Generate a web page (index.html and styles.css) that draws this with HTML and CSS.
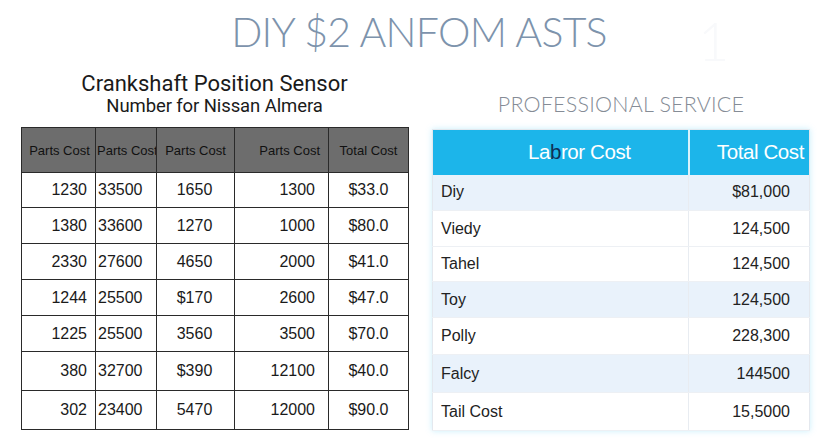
FILE: index.html
```html
<!DOCTYPE html>
<html>
<head>
<meta charset="utf-8">
<link rel="stylesheet" href="styles.css">
</head>
<body>
<div class="page">
  <header class="top">
    <h1 class="title">DIY $2 ANFOM ASTS</h1>
    <span class="ghost">1</span>
  </header>
  <div class="cols">
    <section class="left">
      <h2 class="lh"><span class="l1">Crankshaft Position Sensor</span><span class="l2">Number for Nissan Almera</span></h2>
      <table class="parts">
        <thead>
          <tr><th class="c1">Parts Cost</th><th class="c2">Parts Cost</th><th class="c3">Parts Cost</th><th class="c4">Parts Cost</th><th class="c5">Total Cost</th></tr>
        </thead>
        <tbody>
          <tr class="r1"><td class="c1">1230</td><td class="c2">33500</td><td class="c3">1650</td><td class="c4">1300</td><td class="c5">$33.0</td></tr>
          <tr class="r2"><td class="c1">1380</td><td class="c2">33600</td><td class="c3">1270</td><td class="c4">1000</td><td class="c5">$80.0</td></tr>
          <tr class="r3"><td class="c1">2330</td><td class="c2">27600</td><td class="c3">4650</td><td class="c4">2000</td><td class="c5">$41.0</td></tr>
          <tr class="r4"><td class="c1">1244</td><td class="c2">25500</td><td class="c3">$170</td><td class="c4">2600</td><td class="c5">$47.0</td></tr>
          <tr class="r5"><td class="c1">1225</td><td class="c2">25500</td><td class="c3">3560</td><td class="c4">3500</td><td class="c5">$70.0</td></tr>
          <tr class="r6"><td class="c1">380</td><td class="c2">32700</td><td class="c3">$390</td><td class="c4">12100</td><td class="c5">$40.0</td></tr>
          <tr class="r7"><td class="c1">302</td><td class="c2">23400</td><td class="c3">5470</td><td class="c4">12000</td><td class="c5">$90.0</td></tr>
        </tbody>
      </table>
    </section>
    <section class="right">
      <h2 class="rh">PROFESSIONAL SERVICE</h2>
      <table class="service">
        <thead>
          <tr><th class="s1">La<span class="cur">b</span>ror Cost</th><th class="s2">Total Cost</th></tr>
        </thead>
        <tbody>
          <tr class="alt h1r"><td>Diy</td><td class="v">$81,000</td></tr>
          <tr class="h2r"><td>Viedy</td><td class="v">124,500</td></tr>
          <tr class="h3r"><td>Tahel</td><td class="v">124,500</td></tr>
          <tr class="alt h4r"><td>Toy</td><td class="v">124,500</td></tr>
          <tr class="h5r"><td>Polly</td><td class="v">228,300</td></tr>
          <tr class="alt h6r"><td>Falcy</td><td class="v">144500</td></tr>
          <tr class="h7r"><td>Tail Cost</td><td class="v">15,5000</td></tr>
        </tbody>
      </table>
    </section>
  </div>
</div>
</body>
</html>
```
FILE: styles.css
```css
html, body {
  margin: 0;
  padding: 0;
  background: #ffffff;
}
.page {
  width: 832px;
  height: 448px;
  overflow: hidden;
  font-family: "Liberation Sans", Arial, sans-serif;
}
.top {
  position: relative;
  height: 66px;
  display: flex;
  justify-content: center;
}
.title {
  margin: 0;
  padding-top: 5px;
  padding-left: 6px;
  font-family: Lato, "Open Sans", sans-serif;
  font-weight: 300;
  font-size: 41px;
  line-height: 54px;
  letter-spacing: -0.7px;
  color: #7d93ac;
}
.ghost {
  position: absolute;
  left: 698px;
  top: 8px;
  font-family: Lato, sans-serif;
  font-weight: 300;
  font-size: 54px;
  color: #f8f9fb;
}
.cols {
  display: flex;
  gap: 24px;
  padding-left: 21px;
}
.left {
  width: 387px;
  display: flex;
  flex-direction: column;
}
.lh {
  margin: 0;
  height: 61px;
  display: flex;
  flex-direction: column;
  align-items: center;
  font-family: Roboto, "Open Sans", sans-serif;
  font-weight: 400;
  color: #1a1a1a;
}
.l1 {
  font-size: 22px;
  line-height: 24px;
  padding-top: 6px;
  letter-spacing: 0;
}
.l2 {
  font-size: 18.5px;
  line-height: 20px;
  letter-spacing: -0.1px;
}
.parts {
  border-collapse: collapse;
  width: 387px;
  font-size: 16px;
  color: #1a1a1a;
  table-layout: fixed;
}
.parts th, .parts td {
  box-sizing: border-box;
  border: 1.5px solid #2a2a2a;
  padding: 0;
  white-space: nowrap;
  overflow: hidden;
}
.parts thead th {
  background: #6d6d6d;
  height: 45px;
  font-size: 13px;
  font-weight: 400;
  color: #111;
}
.parts th.c1, .parts td.c1 { width: 74px; }
.parts th.c2, .parts td.c2 { width: 61px; }
.parts th.c3, .parts td.c3 { width: 78px; }
.parts th.c4, .parts td.c4 { width: 94px; }
.parts th.c5, .parts td.c5 { width: 80px; }
.parts td.c1 { text-align: right; padding-right: 8px; }
.parts td.c2 { text-align: left; padding-left: 2px; }
.parts td.c3 { text-align: center; padding-right: 2px; }
.parts td.c4 { text-align: right; padding-right: 13px; }
.parts td.c5 { text-align: center; }
.parts th.c1 { text-align: center; padding-left: 2px; }
.parts th.c2 { text-align: left; padding-left: 1px; }
.parts th.c4 { text-align: right; padding-right: 8px; }
.parts tr.r1 td { height: 35px; }
.parts tr.r2 td, .parts tr.r3 td, .parts tr.r4 td, .parts tr.r5 td { height: 36px; }
.parts tr.r6 td, .parts tr.r7 td { height: 39px; }
.right {
  width: 378px;
  display: flex;
  flex-direction: column;
}
.rh {
  margin: 0;
  height: 63px;
  box-sizing: border-box;
  display: flex;
  align-items: flex-end;
  justify-content: center;
  padding-bottom: 12px;
  font-family: Lato, "Open Sans", sans-serif;
  font-weight: 300;
  font-size: 21.5px;
  letter-spacing: 0.2px;
  color: #858c96;
}
.service {
  border-collapse: collapse;
  width: 378px;
  table-layout: fixed;
  font-size: 16px;
  color: #222;
  border: 1px solid #e4e8ee;
  box-shadow: 0 0 6px rgba(100, 210, 245, 0.35);
}
.service th, .service td {
  box-sizing: border-box;
}
.service thead th {
  background: #1cb5ea;
  color: #ffffff;
  font-weight: 400;
  font-size: 20.5px;
  height: 45px;
  padding: 0;
  letter-spacing: -0.4px;
}
.service th.s1 {
  width: 256px;
  text-align: center;
  padding-left: 38px;
  border-right: 2px solid #d9f3fc;
}
.service th.s2 {
  text-align: right;
  padding-right: 5px;
}
.cur {
  color: #0f3057;
}
.service td {
  padding: 0 0 0 8px;
  height: 36px;
  border-bottom: 1px solid #edf0f4;
}
.service td.v {
  text-align: right;
  padding-right: 19px;
  border-left: 1px solid #e8ecf1;
}
.service tr.alt td {
  background: #e9f2fb;
}
.service tr.h3r td { height: 35px; }
.service tr.h5r td { height: 37px; }
.service tr.h6r td, .service tr.h7r td { height: 38px; }
```
